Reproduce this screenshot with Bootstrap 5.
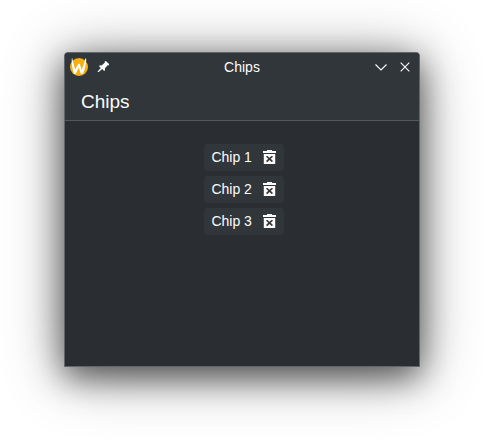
<!DOCTYPE html>
<html lang="en">
<head>
<meta charset="utf-8">
<meta name="viewport" content="width=device-width, initial-scale=1">
<title>Chips</title>
<link href="https://cdn.jsdelivr.net/npm/bootstrap@5.3.0/dist/css/bootstrap.min.css" rel="stylesheet">
<style>
body { font: 14px/20px "Liberation Sans", Arial, sans-serif; color: #fcfcfc; background: #fff; padding: 52px 64px 0; height: 443px; overflow: hidden; }
.app-window { width: 356px; height: 315px; background: #2a2e32; border: 1px solid #5f666c; border-radius: 4px 4px 0 0; box-shadow: 0 10px 32px rgba(0,0,0,.55), 0 6px 60px rgba(0,0,0,.42); }
.app-head { background: #31363b; border-radius: 3px 3px 0 0; }
.title-bar { height: 28px; padding: 0 4px 0 5px; }
.title-side { width: 64px; }
.title-bar > span { padding-right: 1px; }
.page-head { height: 40px; padding: 3px 16px 0; border-bottom: 1px solid #53585c; }
.page-head h1 { font-size: 19px; line-height: 24px; font-weight: 400; }
.chip-list { gap: 5px; padding: 23px 0 0 4px; }
.chip { width: 80px; height: 27px; padding: 0 7px 0 7.4px; background: #31363b; border-radius: 3px; }
.chip span { padding-bottom: 2px; }
svg { display: block; flex: none; }
</style>
<script src="https://cdn.jsdelivr.net/npm/bootstrap@5.3.0/dist/js/bootstrap.bundle.min.js"></script>
</head>
<body>
<svg width="0" height="0" class="position-absolute">
  <symbol id="trash" viewBox="0 0 14 15">
    <path fill="#fcfcfc" fill-rule="evenodd" d="M0 1h4V0h5v1h4v2H0zM.8 4h11.400v10H.8zM3 6.700L5.300 8.800 3 11l1 1h.5l2-2 2 2H9l1-1-2.300-2.200L10 6.700 9.300 6H8.500l-2 1.800-2-1.800h-.8z"/>
  </symbol>
</svg>
<main class="app-window d-flex flex-column">
  <header class="app-head">
    <div class="title-bar d-flex align-items-center justify-content-between">
      <div class="title-side d-flex align-items-center">
        <svg width="18" height="18" viewBox="0 0 18 18"><circle cx="9" cy="9" r="9" fill="#f6b014"/><path fill="#fff" d="M2.200 0C3 3.500 4 7.800 5.300 11.500L8.200 5.800h1.700l1.600 6.200C13 9 14.400 5 15.300 0l1 1.500c-.3 5-1.600 10-3.500 14.200h-2L8.800 9.500l-3 6.200H4C2.300 11 1.500 6 1.700 1z"/></svg>
        <svg class="ms-2" width="16" height="16" viewBox="0.5 0 16 16"><path fill="#fcfcfc" d="M9.200 2.600 10.300 2l3.300 3.100-.5 1.300-1-.1-2.800 3.200.3 1.500-1 .9-1.900-1.800-3.500 3-1-.1.100-.8 3-3.300L3.500 7.200l.9-1 1.700.2L9.400 3.500z"/></svg>
      </div>
      <span>Chips</span>
      <div class="title-side d-flex align-items-center justify-content-end">
        <svg width="16" height="16" viewBox="0 0 16 16"><path d="M2.500 5.500 8 11l5.500-5.500" fill="none" stroke="#fcfcfc" stroke-width="1.100"/></svg>
        <svg class="ms-2" width="18" height="16" viewBox="0 0 18 16"><path d="m3.700 3.700 8.600 8.600m0-8.600-8.600 8.600" fill="none" stroke="#fcfcfc" stroke-width="1.100"/></svg>
      </div>
    </div>
    <div class="page-head d-flex align-items-center"><h1 class="m-0">Chips</h1></div>
  </header>
  <section class="chip-list d-flex flex-column align-items-center">
    <div class="chip d-flex align-items-center justify-content-between"><span>Chip 1</span><svg width="14" height="15"><use href="#trash"/></svg></div>
    <div class="chip d-flex align-items-center justify-content-between"><span>Chip 2</span><svg width="14" height="15"><use href="#trash"/></svg></div>
    <div class="chip d-flex align-items-center justify-content-between"><span>Chip 3</span><svg width="14" height="15"><use href="#trash"/></svg></div>
  </section>
</main>
</body>
</html>
